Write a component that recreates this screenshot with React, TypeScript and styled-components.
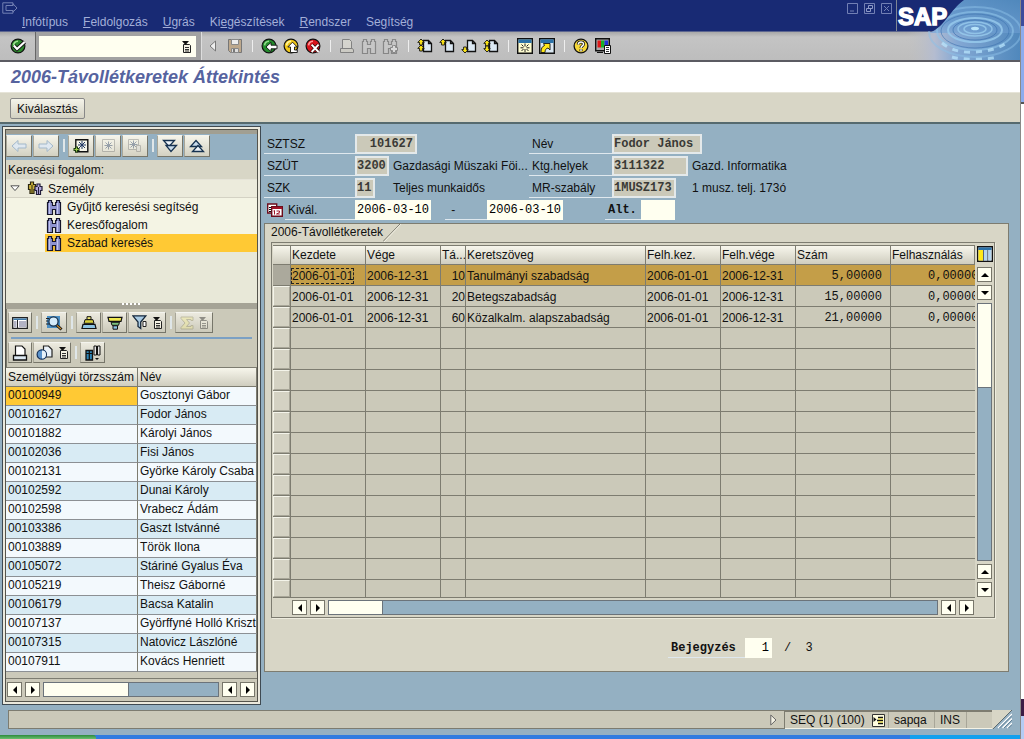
import React from "react";
import styled, { createGlobalStyle, css } from "styled-components";

const c = {
  navy: "#182a74",
  menuText: "#a3afd8",
  bar: "#c0c0c0",
  sand: "#d8d6c6",
  stone: "#cbc9b9",
  cream: "#e8e8d8",
  ivory: "#fffff0",
  steel: "#94b0c2",
  line: "#7d7c70",
  dark: "#3f4a52",
  amber: "#ffc934",
};

const Global = createGlobalStyle`
  * { box-sizing: border-box; }
  body {
    margin: 0;
    background: ${c.steel};
    color: #111;
    font: 12px/16px "Liberation Sans", Arial, sans-serif;
  }
  button, input { font: inherit; color: inherit; margin: 0; border-radius: 0; }
  button { padding: 0; cursor: default; }
  svg { display: block; flex: none; }
  ul { margin: 0; padding: 0; list-style: none; }
`;

/* ---------- icons ---------- */

const Svg = styled.svg.attrs({ "aria-hidden": true })<{ $dim?: boolean }>`
  opacity: ${(p) => (p.$dim ? 0.4 : 1)};
`;

type IconProps = { dim?: boolean };
const make =
  (w: number, h: number, body: React.ReactNode) =>
  ({ dim }: IconProps) => (
    <Svg width={w} height={h} viewBox={`0 0 ${w} ${h}`} $dim={dim}>
      {body}
    </Svg>
  );

const disc = (fill: string, light: string) => (
  <>
    <circle cx="8" cy="8" r="6.9" fill={fill} stroke="#111" strokeWidth="1.2" />
    <path d="M3.6 7.4A4.6 4.6 0 0 1 8 3.2" fill="none" stroke={light} strokeWidth="1.6" />
  </>
);

const OkIcon = make(16, 16, <>{disc("#2d8a2d", "#9fe08f")}<path d="M3.8 7.6 7 11 14.6 4" fill="none" stroke="#111" strokeWidth="4" /><path d="M3.8 7.6 7 11 14.6 4" fill="none" stroke="#fff" strokeWidth="2.2" /></>);
const BackIcon = make(17, 16, <>{disc("#238a2c", "#8fdc88")}<path d="M5 9l5-4.600v2.800H16v3.600h-6v2.800z" fill="#fff" stroke="#111" strokeWidth=".9" /></>);
const ExitIcon = make(16, 16, <>{disc("#f0c81a", "#fff7a0")}<path d="M9.5 4.2 14.2 9H11.500v3h2.800v2.500H7.500V9H4.800z" fill="#fff" stroke="#111" strokeWidth=".9" /></>);
const CancelIcon = make(16, 16, <>{disc("#d8141c", "#ff9c9c")}<path d="M6.6 6.6l7 7.4M13.6 6.6l-7 7.4" fill="none" stroke="#300" strokeWidth="3.400" /><path d="M6.6 6.6l7 7.4M13.6 6.6l-7 7.4" fill="none" stroke="#fff" strokeWidth="2" /></>);
const CollapseIcon = make(8, 12, <path d="M6.5 1v10L1 6z" fill="#eee" stroke="#777" />);
const SaveIcon = make(16, 16, <><path d="M1.5 1.5h13v13h-11l-2-2z" fill="#bda88c" stroke="#777" /><path d="M4.5 1.5h7v5h-7z" fill="#ececec" stroke="#888" /><path d="M4.5 10.5h7v4h-7z" fill="#ddd" stroke="#888" /><path d="M6 11h2v3H6z" fill="#777" /></>);
const PrintIcon = make(16, 16, <><path d="M3.500 1.500h7l2 2v7h-9z" fill="#f2f0e0" stroke="#222" /><path d="M1.500 10.500h12l1 1.500v2.5h-13z" fill="#dedccb" stroke="#222" /></>);
const binocular = (fill: string, stroke: string) => (
  <path d="M1.500 3.500h1v-2h3v2h1v3h3v-3h1v-2h3v2h1v12h-5v-5h-3v5h-5z" fill={fill} stroke={stroke} strokeWidth="1.200" />
);
const FindIcon = make(16, 16, binocular("#d0d0d0", "#333"));
const FindNextIcon = make(18, 16, <>{binocular("#d0d0d0", "#333")}<path d="M11.500 7.500h2v2h2v3h-2v2h-3v-2h-2v-3h2v-2z" fill="#fff" stroke="#333" /></>);
const TreeFindIcon = make(16, 16, <>{binocular("#8f93cf", "#15152a")}<path d="M3.500 4v11M11.500 4v11" stroke="#c0c4f0" /></>);

const sheet = <path d="M6.500 2.500h5l3 3v8h-8z M11.500 2.500v3h3" fill="#dce9f4" stroke="#111" strokeWidth="1.300" />;
const up = (y: number) => <path d={`M4 ${y}l3.200 3.400H5.400v2.600H2.600v-2.600H.8z`} fill="#ffe818" stroke="#111" strokeWidth=".9" />;
const down = (y: number) => <path d={`M4 ${y}l3.200-3.400H5.400v-2.600H2.600v2.600H.8z`} fill="#ffe818" stroke="#111" strokeWidth=".9" />;
const FirstIcon = make(16, 16, <>{sheet}{up(1)}{up(7)}</>);
const PrevIcon = make(16, 16, <>{sheet}{up(1)}</>);
const NextIcon = make(16, 16, <>{sheet}{down(15)}</>);
const LastIcon = make(16, 16, <>{sheet}{up(2)}{down(14)}</>);
const windowFrame = <><path d="M.7.7h14.600v14.600H.7z" fill="#fffdd0" stroke="#111" strokeWidth="1.400" /><path d="M1.400 1.400h13.200V5H1.400z" fill="#2c72a8" /></>;
const SessionIcon = make(16, 16, <>{windowFrame}<path d="M8 5.500v3M8 11v3M3.500 9.800h3M9.500 9.800h3M4.500 6.500l2 2M11.500 6.500l-2 2M4.500 13l2-2M11.500 13l-2-2" stroke="#222" fill="none" /></>);
const ShortcutIcon = make(16, 16, <><path d="M.7.7h14.600v14.600H.7z" fill="#dbe8f2" stroke="#111" strokeWidth="1.400" /><path d="M1.400 1.400h13.200V5H1.400z" fill="#2c72a8" /><path d="M2 14.500c0-4 1-6 3.500-7L4.500 5.500H11v6.500l-2-2c-2 .4-3 1.800-3 4.500z" fill="#ffe818" stroke="#111" strokeWidth=".9" /></>);
const HelpIcon = make(16, 16, <><circle cx="8" cy="8" r="6.900" fill="#f6d83a" stroke="#111" strokeWidth="1.300" /><path d="M5.300 6.400c0-3.400 5.400-3.200 5.200-.2-.1 1.700-2.500 1.800-2.500 3.800M8 11.300v2" fill="none" stroke="#111" strokeWidth="3" /><path d="M5.300 6.400c0-3.400 5.400-3.200 5.200-.2-.1 1.700-2.500 1.800-2.500 3.800M8 11.300v2" fill="none" stroke="#fff" strokeWidth="1.500" /></>);
const LayoutIcon = make(17, 16, <><path d="M.7.7h13.600v12H.7z" fill="#aaa" stroke="#111" strokeWidth="1.400" /><path d="M2.500 2.500h3.500v7H2.500z" fill="#e01818" /><path d="M6 2.500h3.500v7H6z" fill="#18b028" /><path d="M9.500 2.500H13v7H9.500z" fill="#2430d8" /><path d="M2 14.500h6" stroke="#111" /><path d="M9.500 7.500h6v8h-6z" fill="#fff" stroke="#111" /><path d="M11 9.500h3M11 11.500h3M11 13.500h3" stroke="#333" /></>);
const MenuIcon = make(11, 12, <><path d="M2.500 3.500h6l1 1v7h-7z" fill="#f4f2e4" stroke="#222" /><path d="M4 6.500h4M4 8.500h4M4 10h4" stroke="#333" /><path d="M1 0h7L4.500 4z" fill="#111" /></>);

const LeftArrowIcon = make(16, 14, <path d="M1 7l6-5.500V5h8v4H7v3.500z" fill="#dfe8f0" stroke="#a3b8ca" />);
const RightArrowIcon = make(16, 14, <path d="M15 7L9 1.500V5H1v4h8v3.500z" fill="#dfe8f0" stroke="#a3b8ca" />);
const star = (x: number, y: number) => (
  <path d={`M${x} ${y - 4}v8M${x - 4} ${y}h8M${x - 3} ${y - 3}l6 6M${x + 3} ${y - 3}l-6 6`} stroke="#233b66" fill="none" strokeWidth="1" />
);
const AddHelpIcon = make(16, 16, <><path d="M2.800 1.700h12v12h-12z" fill="#f7f6ea" stroke="#111" strokeWidth="1.400" />{star(9, 7)}<path d="M3.500 8.500v6M.5 11.500h6" stroke="#1d3c10" strokeWidth="3" /><path d="M3.500 9.500v4M1.500 11.500h4" stroke="#9fd04a" strokeWidth="1" /></>);
const HelpBoxIcon = make(16, 16, <><path d="M2.500 1.500h12v12h-12z" fill="#f7f6ea" stroke="#777" />{star(8.5, 7.5)}</>);
const HelpBoxesIcon = make(16, 16, <><path d="M1.500 1.500h10v10h-10z" fill="#f7f6ea" stroke="#777" />{star(6.5, 6.5)}<path d="M9.500 7.500h4v6h-4z" fill="#ddd" stroke="#777" /></>);
const ExpandAllIcon = make(16, 14, <><path d="M1.500 1.500h11L7 7.500z" fill="#eef4fa" stroke="#163250" strokeWidth="1.300" /><path d="M4 6.500h10.500L9 12.500z" fill="#c9dcec" stroke="#163250" strokeWidth="1.300" /></>);
const CollapseAllIcon = make(16, 14, <><path d="M1.500 7.500h11L7 1.500z" fill="#c9dcec" stroke="#163250" strokeWidth="1.300" /><path d="M3.500 12.500h11L9 6.500z" fill="#eef4fa" stroke="#163250" strokeWidth="1.300" /></>);
const OpenNodeIcon = make(10, 7, <path d="M.8.8h8.400L5 5.600z" fill="#fff" stroke="#555" />);
const PersonsIcon = make(16, 15, <><path d="M3.500 1h3v2.500h2v5h-1.500v4h-4v-4H1.500v-5h2z" fill="#c9b13c" stroke="#2b2610" strokeWidth="1.200" /><path d="M5 4v8" stroke="#2b2610" /><path d="M10 3h3v2.500h2v4h-1.500v4h-4v-4H8v-4h2z" fill="#b4aadc" stroke="#221d3a" strokeWidth="1.200" /><path d="M11.500 6v7" stroke="#221d3a" /></>);
const DetailIcon = make(16, 12, <><path d="M.7.7h14.600v10.600H.7z" fill="#fff" stroke="#222" strokeWidth="1.300" /><path d="M1.400 1.400h13.200V3H1.400z" fill="#3c78a8" /><path d="M5.500 3v8" stroke="#222" /><path d="M2 5h2.500M2 7h2.500M2 9h2.500M7 5h7M7 7h7M7 9h7" stroke="#668" /></>);
const ZoomIcon = make(18, 16, <><path d="M2 1h13v12H2z" fill="#4b8fc4" /><path d="M1 3.500h3M1 6h2M1 9h3" stroke="#222" /><path d="M11 9.500l5.500 5" stroke="#111" strokeWidth="3" /><path d="M11.500 10l4.500 4" stroke="#c98a2a" strokeWidth="1.200" /><circle cx="8.500" cy="6.500" r="4.600" fill="#d6ecfa" stroke="#16304c" strokeWidth="1.300" /></>);
const SortAscIcon = make(16, 14, <><path d="M6 .7h4v3H6z" fill="#f4ec70" stroke="#111" /><path d="M4 3.700h8l1 3.600H3z" fill="#d8cf3c" stroke="#111" /><path d="M2 8.300h12l1 4.200H1z" fill="#8ec4e4" stroke="#111" strokeWidth="1.200" /></>);
const SortDescIcon = make(16, 14, <><path d="M1 1.300h14l-1 4H2z" fill="#f0e850" stroke="#111" strokeWidth="1.200" /><path d="M4 6.300h8.500l-1 3H5z" fill="#7cc07c" stroke="#111" /><path d="M6 9.800h4.500v3.400H6z" fill="#8ec4e4" stroke="#111" /></>);
const FilterIcon = make(16, 15, <><path d="M.8.8h13L8.700 7v6.500L6 11.500V7z" fill="#a9cbe4" stroke="#16283c" strokeWidth="1.300" /><path d="M11 6.500h3v5h-3z" fill="#fff" stroke="#222" /></>);
const SumIcon = make(14, 14, <path d="M1 1h12v3.500h-2V3.500H6.500L9.500 7l-3 3.500H11v-1h2V13H1v-1.500L5 7 1 2.500z" fill="#f4ee90" stroke="#8a865a" />);
const ListPrintIcon = make(16, 16, <><path d="M3.500 1h6.500l3 3v7H3.500z" fill="#fff" stroke="#111" strokeWidth="1.200" /><path d="M1.500 10.500h13V15h-13z" fill="#dce8f2" stroke="#111" strokeWidth="1.300" /></>);
const ExportIcon = make(18, 16, <><path d="M7.500 1h5l3.500 3.500V12H7.500z" fill="#eaf2fa" stroke="#222" strokeWidth="1.200" /><circle cx="5.800" cy="9.500" r="4.700" fill="#5b93cc" stroke="#14305a" strokeWidth="1.200" /><path d="M6 5.500v8a4 4 0 0 0 0-8z" fill="#e8f2fa" /></>);
const ColumnsIcon = make(16, 16, <><path d="M1 5.500h6.500V15H1z" fill="#2f84b4" stroke="#111" strokeWidth="1.300" /><path d="M4.300 5.500V15M1 8.500h6.500" stroke="#111" strokeWidth="1.200" /><path d="M9 1h2.500v9H9zM12.500 1H15v9h-2.500z" fill="#e4e4e4" stroke="#111" /><path d="M10 13h4l-2 2z" fill="#111" /></>);
const CalendarIcon = make(16, 14, <><path d="M.7 1h9v9h-9z" fill="#fff" stroke="#6d0d1c" strokeWidth="1.400" /><path d="M2 4.500h2M2 6.500h2M2 8.500h2" stroke="#111" /><path d="M4.700 3.700h10.600v9.600H4.700z" fill="#fff" stroke="#6d0d1c" strokeWidth="1.400" /><path d="M5 4h10v2H5z" fill="#a01428" /><path d="M6.500 8l1-.5v4M9.500 8h3v1.500l-3 1.500h3.300" fill="none" stroke="#a01428" /></>);
const SettingsIcon = make(16, 16, <><path d="M.7.7h14.600v14.600H.7z" fill="#fff" stroke="#111" strokeWidth="1.400" /><path d="M1.400 1.400h13.200V4H1.400z" fill="#2c72a8" /><path d="M1.500 4H6v10.500H1.500z" fill="#ffe818" /><path d="M7 4h3v10.500H7zM11.300 4h3v10.500h-3z" fill="#b5d6ee" /><path d="M6.500 4v11M10.700 4v11" stroke="#567" /></>);
const SystemIcon = make(13, 13, <><path d="M.5.5h12v12H.5z" fill="#fffde0" stroke="#333" /><path d="M1.500 3l3 2.500L1.500 8z" fill="#111" /><path d="M6 3.500h5M5 6.500h6M6 9.500h5" stroke="#111" strokeWidth="1.500" /><path d="M6 5h5M6 8h5" stroke="#e8d820" /></>);
const ExitWindowIcon = make(16, 12, <path d="M11 3.500V.8H.8v10.400H11V8.500M4 3.500h7V1.800L15 6l-4 4V8.500H4z" fill="none" stroke="#7280b4" />);
const MinIcon = make(11, 11, <path d="M.5.5h10v10H.5zM3 8h4" fill="none" stroke="#7280b4" />);
const RestoreIcon = make(11, 11, <><path d="M.5.5h10v10H.5z" fill="none" stroke="#7280b4" /><path d="M4.500 2.500h4v3h-4zM2.500 5.500h4v3h-4z" fill="none" stroke="#8f9bc8" /></>);
const CloseIcon = make(11, 11, <path d="M.5.5h10v10H.5zM3 3l5 5M8 3L3 8" fill="none" stroke="#7280b4" />);
const StatusArrowIcon = make(7, 12, <path d="M.8 1v10L6 6z" fill="#f4f2e4" stroke="#666" />);
const GripIcon = make(20, 19, <><path d="M0 0h20L1 19H0z" fill={c.sand} /><path d="M20 0 1 19" stroke="#5c6a70" /><path d="M20 4 6 18M20 8.500l-9.500 9.500M20 13l-5 5" stroke="#fff" strokeWidth="1.300" /><path d="M20 5.500 7.500 18M20 10l-8 8M20 14.500 16.500 18" stroke="#5f7f95" /></>);

const arrows = { left: "M7 1v8L3 5z", right: "M3 1v8l4-4z", up: "M1 7h8L5 3z", down: "M1 3h8L5 7z" };

/* ---------- frame ---------- */

const Screen = styled.div`display: flex; min-height: 100vh;`;
const AppWindow = styled.div`flex: 1; min-width: 0; display: flex; flex-direction: column; background: ${c.steel};`;
const EdgeStrip = styled.div`
  width: 4px;
  display: flex;
  flex-direction: column;
  background: #fff;
  border-left: 1px solid #8a8a88;
`;
const EdgePart = styled.div<{ $h: number; $bg: string }>`height: ${(p) => p.$h}px; background: ${(p) => p.$bg};`;
const EdgeGap = styled.div`flex: 1;`;

const Header = styled.header`position: relative;`;
const MenuBar = styled.div`height: 32px; padding: 0 128px 0 2px; display: flex; justify-content: space-between; background: ${c.navy}; border-bottom: 1px solid #5c6690;`;
const MenuLeft = styled.div`padding-top: 2px;`;
const Menus = styled.nav`display: flex; gap: 15px; padding-left: 20px;`;
const MenuButton = styled.button`border: 0; background: none; color: ${c.menuText}; line-height: 16px;`;
const WindowButtons = styled.div`display: flex; gap: 6px; padding-top: 3px; align-items: flex-start;`;
const FrameButton = styled.button`border: 0; background: none; display: block;`;
const WaterArt = styled.svg`position: absolute; right: 0; top: 0;`;

const ToolBar = styled.div`
  height: 30px;
  display: flex;
  align-items: center;
  background: linear-gradient(#a8a8a8, #c4c4c4 5px, #bdbdbd);
  border-bottom: 2px solid #5b5b62;
`;
const OkBox = styled.div`width: 36px; height: 100%; padding-left: 10px; display: flex; align-items: center; border-right: 1px solid #666;`;
const CommandBox = styled.div`
  width: 166px;
  height: 100%;
  padding: 4px 5px 3px 3px;
  display: flex;
  background: #a2a2a2;
  border-right: 1px solid #ddd;
`;
const CommandField = styled.div`flex: 1; min-width: 0; display: flex; align-items: center; background: ${c.ivory}; padding-right: 4px;`;
const CommandInput = styled.input`flex: 1; min-width: 0; border: 0; background: none; outline: 0;`;
const ToolButton = styled.button`width: 22px; height: 22px; border: 0; background: none; display: flex; align-items: center; justify-content: center;`;
const ToolSep = styled.i`width: 12px; height: 12px; display: flex; justify-content: center; &::after { content: ""; width: 1px; background: #eee; }`;

const TitleBar = styled.div`height: 31px; padding: 0 11px; background: #fff; border-bottom: 1px solid #e6e4d8;`;
const Title = styled.h1`margin: 0; font-size: 18px; line-height: 30px; font-style: italic; font-weight: bold; color: #56639f;`;
const ActionBar = styled.div`height: 31px; padding: 5px 10px; background: ${c.sand}; border-bottom: 2px solid #566a6e;`;

const raised = css`
  background: linear-gradient(#f5f4ea, #d3d1c2);
  border: 1px solid;
  border-color: #f4f4ee #77766a #77766a #a8a698;
`;
const ActionButton = styled.button`${raised} height: 21px; padding: 0 6px; border-color: #888; border-radius: 2px;`;

/* ---------- left panel ---------- */

const Body = styled.main`flex: 1; display: flex; padding: 2px 11px 1px 2px;`;
const SidePanel = styled.section`width: 259px; flex: none; display: flex; padding: 2px; background: #ebe9dd; border: 1px solid ${c.dark};`;
const SideInner = styled.div`flex: 1; min-width: 0; display: flex; flex-direction: column; border: 1px solid #55544c; background: ${c.stone};`;
const SearchTools = styled.div`
  height: 30px;
  padding-top: 1px;
  display: flex;
  align-items: flex-start;
  gap: 1px;
  background: ${c.steel};
  border-top: 4px solid #a19f92;
`;
const PanelButton = styled.button<{ $w?: number }>`
  ${raised}
  width: ${(p) => p.$w ?? 26}px;
  height: 22px;
  display: flex;
  align-items: center;
  justify-content: center;
  gap: 4px;
`;
const PanelSep = styled.i`width: 7px; height: 13px; margin-top: 4px; display: flex; justify-content: center; &::after { content: ""; width: 2px; background: #dfe6e8; }`;
const Caption = styled.div`height: 20px; padding: 2px 2px; background: ${c.sand}; border-bottom: 1px solid #e6e4d8;`;
const TreeArea = styled.div`flex: 1; background: ${c.cream};`;
const TreeRow = styled.button<{ $selected?: boolean; $leaf?: boolean }>`
  width: 100%;
  height: 18px;
  padding: 0 0 0 ${(p) => (p.$leaf ? 40 : 3)}px;
  display: flex;
  align-items: center;
  border: 0;
  border-bottom: ${(p) => (p.$leaf ? "0" : "1px solid #d4d2c4")};
  background: ${(p) => (p.$selected ? `linear-gradient(90deg, #f4f4e4 39px, ${c.amber} 39px)` : p.$leaf ? "#f4f4e4" : "#ecebdc")};
`;
const TreeText = styled.span`padding-left: 5px;`;
const NodeMark = styled.span`width: 18px; padding-left: 1px;`;
const Splitter = styled.div`height: 6px; display: flex; justify-content: center; align-items: flex-start; background: #a5a396;`;
const SplitterGrip = styled.i`width: 20px; height: 2px; background: repeating-linear-gradient(90deg, #fff 0 2px, transparent 2px 4px);`;
const ListTools = styled.div`height: 58px; padding: 3px 5px 3px 1px; border-left: 1px solid #77766a;`;
const ListToolRow = styled.div`display: flex; gap: 1px;`;
const ListButton = styled(PanelButton)`height: 21px; background: linear-gradient(#eceadf, #cbc9ba);`;
const ListRule = styled.hr`margin: 4px 0 3px 3px; border: 0; height: 2px; background: #7ba0c4;`;

const clip = css`overflow: hidden; white-space: nowrap;`;
const DataTable = styled.table`width: 100%; table-layout: fixed; border-collapse: separate; border-spacing: 0;`;
const headCell = css`
  ${clip}
  padding: 0 1px;
  text-align: left;
  font-weight: normal;
  background: linear-gradient(#f7f6ec, #cfcdbf);
  border-right: 1px solid ${c.line};
  border-bottom: 1px solid ${c.line};
`;
const ListHead = styled.th`${headCell} height: 20px; border-top: 1px solid ${c.line}; padding: 0 2px;`;
const ListCell = styled.td<{ $alt?: boolean; $selected?: boolean }>`
  ${clip}
  height: 19px;
  padding: 0 2px 2px;
  line-height: 16px;
  border-right: 1px solid ${c.line};
  border-bottom: 1px solid #8c9094;
  background: ${(p) => (p.$selected ? c.amber : p.$alt ? "#d8ebf4" : "#f3f9fd")};
`;
const ListScroll = styled.div`height: 29px; padding: 4px 2px 4px 1px; border-top: 6px solid ${c.stone}; background: ${c.stone}; box-shadow: inset 0 1px ${c.line};`;

/* ---------- scroll bars ---------- */

const Bar = styled.div<{ $vertical?: boolean }>`
  flex: 1;
  display: flex;
  flex-direction: ${(p) => (p.$vertical ? "column" : "row")};
  gap: 3px;
`;
const BarButton = styled.button`width: 15px; height: 15px; border: 1px solid #77766a; background: ${c.ivory}; display: flex; align-items: center; justify-content: center;`;
const Track = styled.div<{ $vertical?: boolean }>`
  flex: 1;
  display: flex;
  flex-direction: ${(p) => (p.$vertical ? "column" : "row")};
  border: 1px solid #6b737a;
  background: ${c.steel};
`;
const Thumb = styled.div<{ $vertical?: boolean; $size: number }>`
  ${(p) => (p.$vertical ? `height: ${p.$size}px; border-bottom: 1px solid #6b737a;` : `width: ${p.$size}px; border-right: 1px solid #6b737a;`)}
  background: ${c.ivory};
`;
type Dir = keyof typeof arrows;
const Arrow = ({ dir }: { dir: Dir }) => (
  <BarButton type="button" aria-label={`Scroll ${dir}`}>
    <svg width="10" height="10" viewBox="0 0 10 10" aria-hidden="true"><path d={arrows[dir]} fill="#000" /></svg>
  </BarButton>
);
const ScrollBar = ({ vertical, thumb }: { vertical?: boolean; thumb: number }) => {
  const [a, b]: Dir[] = vertical ? ["up", "down"] : ["left", "right"];
  return (
    <Bar $vertical={vertical}>
      <Arrow dir={a} /><Arrow dir={b} />
      <Track $vertical={vertical}><Thumb $vertical={vertical} $size={thumb} /></Track>
      <Arrow dir={a} /><Arrow dir={b} />
    </Bar>
  );
};

/* ---------- right side ---------- */

const Work = styled.section`flex: 1; min-width: 0; padding: 8px 0 33px 3px; display: flex; flex-direction: column;`;
const Form = styled.form`display: flex; flex-direction: column; gap: 2px;`;
const FormRow = styled.div`display: flex; height: 20px; white-space: nowrap;`;
const Label = styled.label<{ $w: number; $mono?: boolean }>`
  width: ${(p) => p.$w}px;
  padding-left: 3px;
  line-height: 20px;
  border-bottom: 1px solid #dfe8ee;
  ${(p) => p.$mono && `font-family: "Liberation Mono", monospace; font-weight: bold;`}
`;
const FieldSlot = styled.div<{ $w: number }>`width: ${(p) => p.$w}px;`;
const Field = styled.input<{ $w: number; $open?: boolean; $right?: boolean }>`
  display: block;
  width: ${(p) => p.$w}px;
  height: 20px;
  padding: 0 ${(p) => (p.$right ? 2 : 0)}px 0 ${(p) => (p.$open ? 1 : 0)}px;
  font-family: "Liberation Mono", monospace;
  font-weight: ${(p) => (p.$open ? "normal" : "bold")};
  color: ${(p) => (p.$open ? "#000" : "#3a3a36")};
  text-align: ${(p) => (p.$right ? "right" : "left")};
  background: ${(p) => (p.$open ? c.ivory : c.stone)};
  border: ${(p) => (p.$open ? "1px" : "2px")} solid ${(p) => (p.$open ? c.ivory : "#e4e9ea")};
  outline: 0;
`;
const Note = styled.span<{ $w?: number }>`width: ${(p) => (p.$w ? p.$w + "px" : "auto")}; padding-left: 4px; line-height: 20px;`;
const IconSlot = styled.div`width: 21px; padding: 3px 0 0 3px;`;
const Spacer = styled.i<{ $w: number }>`width: ${(p) => p.$w}px;`;

const TabPanel = styled.section`flex: 1; margin-top: 3px; background: ${c.sand}; border: 1px solid ${c.line};`;
const TabStrip = styled.div`height: 18px; display: flex;`;
const Tab = styled.h2`margin: 0; padding-left: 6px; font-size: 12px; font-weight: normal; line-height: 16px;`;
const PanelBody = styled.div`padding: 0 13px 0 6px;`;
const GridFrame = styled.div`border: 1px solid ${c.line}; padding: 2px 0 0 1px; box-shadow: 1px 1px #eeecde;`;
const GridTop = styled.div`display: flex;`;
const GridView = styled.div`flex: 1; min-width: 0; overflow: hidden; background: ${c.stone};`;
const GridSide = styled.div`width: 19px; padding: 1px 2px 1px; display: flex; flex-direction: column; gap: 5px;`;
const SettingsButton = styled.button`border: 0; background: none; width: 16px; height: 16px;`;
const GridBottom = styled.div`display: flex; padding: 2px 20px 2px 19px;`;
const GridHead = styled.th`${headCell} height: 20px; border-top: 1px solid ${c.line};`;
const GridRow = styled.tr<{ $selected?: boolean; $last?: boolean }>`
  height: ${(p) => (p.$last ? 18 : 21)}px;
  background: ${(p) => (p.$selected ? "#c49e48" : c.stone)};
`;
const GridCell = styled.td<{ $right?: boolean; $mono?: boolean; $wide?: boolean }>`
  ${clip}
  padding: 1px ${(p) => (p.$mono && !p.$wide ? 8 : 0)}px 0 ${(p) => (p.$wide ? 37 : 1)}px;
  line-height: 16px;
  text-align: ${(p) => (p.$right ? "right" : "left")};
  font-family: ${(p) => (p.$mono ? `"Liberation Mono", monospace` : "inherit")};
  border-right: 1px solid ${c.line};
  border-bottom: 1px solid ${c.line};
  &:last-child { border-right: 0; }
`;
const SelectCell = styled.td`padding: 0; border-right: 1px solid ${c.line}; border-bottom: 1px solid ${c.line}; background: ${c.stone};`;
const RowSelect = styled.button<{ $on?: boolean; $short?: boolean }>`
  display: block;
  width: 100%;
  height: ${(p) => (p.$short ? 17 : 20)}px;
  border: 1px solid;
  border-color: ${(p) => (p.$on ? "#aba99c" : "#f4f4ea #a8a698 #a8a698 #f4f4ea")};
  background: ${(p) => (p.$on ? "#aba99c" : "#d4d2c3")};
`;
const Focus = styled.span`display: inline-block; line-height: 14px; outline: 1px dashed #222;`;
const Entry = styled.div`
  margin-top: 20px;
  padding-left: 397px;
  display: flex;
  height: 20px;
  font-family: "Liberation Mono", monospace;
  line-height: 20px;
`;
const EntryTotal = styled.span`padding-left: 12px;`;

/* ---------- footer ---------- */

const StatusBar = styled.footer`margin: 4px 8px 6px; height: 19px; display: flex;`;
const StatusMessage = styled.div`flex: 1; padding: 0 7px; display: flex; align-items: center; justify-content: flex-end; background: ${c.stone}; border: 1px solid ${c.line};`;
const StatusCells = styled.div`display: flex; background: ${c.stone}; border-top: 2px solid ${c.line}; border-bottom: 1px solid #f4f2e4;`;
const StatusCell = styled.div<{ $w: number }>`
  width: ${(p) => p.$w}px;
  padding-left: 5px;
  display: flex;
  align-items: center;
  gap: 7px;
  white-space: nowrap;
  border-right: 1px solid #a8a698;
  &:last-child { border-right: 0; }
`;
const TaskBar = styled.div`
  height: 4px;
  display: flex;
  background: #2f7be0;
`;
const StartEdge = styled.div`width: 96px; background: linear-gradient(#2c8a3c, #6cc070); border-radius: 0 3px 0 0;`;
const TrayEdge = styled.div`width: 110px; margin-left: auto; background: #12a0ee;`;

/* ---------- data ---------- */

const menus: [string, number][] = [["Infótípus", 0], ["Feldolgozás", 0], ["Ugrás", 0], ["Kiegészítések", 2], ["Rendszer", 0], ["Segítség", 2]];
const people = [
  ["00100949", "Gosztonyi Gábor"], ["00101627", "Fodor János"], ["00101882", "Károlyi János"],
  ["00102036", "Fisi János"], ["00102131", "Györke Károly Csaba"], ["00102592", "Dunai Károly"],
  ["00102598", "Vrabecz Ádám"], ["00103386", "Gaszt Istvánné"], ["00103889", "Török Ilona"],
  ["00105072", "Stáriné Gyalus Éva"], ["00105219", "Theisz Gáborné"], ["00106179", "Bacsa Katalin"],
  ["00107137", "Györffyné Holló Kriszt"], ["00107315", "Natovicz Lászlóné"], ["00107911", "Kovács Henriett"],
];
const heads = ["Kezdete", "Vége", "Tá...", "Keretszöveg", "Felh.kez.", "Felh.vége", "Szám", "Felhasználás"];
const widths = [75, 75, 25, 180, 75, 75, 95];
const quotas = [
  ["2006-01-01", "2006-12-31", "10", "Tanulmányi szabadság", "2006-01-01", "2006-12-31", "5,00000", "0,00000"],
  ["2006-01-01", "2006-12-31", "20", "Betegszabadság", "2006-01-01", "2006-12-31", "15,00000", "0,00000"],
  ["2006-01-01", "2006-12-31", "60", "Közalkalm. alapszabadság", "2006-01-01", "2006-12-31", "21,00000", "0,00000"],
];
const gridRows: string[][] = Array.from({ length: 16 }, (_, i) => quotas[i] ?? heads.map(() => ""));

type Tool = [string, React.ComponentType<IconProps>, boolean?] | null;
const tools: Tool[] = [
  ["Save", SaveIcon], null,
  ["Back", BackIcon], ["Exit", ExitIcon], ["Cancel", CancelIcon], null,
  ["Print", PrintIcon, true], ["Find", FindIcon, true], ["Find next", FindNextIcon, true], null,
  ["First page", FirstIcon], ["Previous page", PrevIcon], ["Next page", NextIcon], ["Last page", LastIcon], null,
  ["New session", SessionIcon], ["Create shortcut", ShortcutIcon], null,
  ["Help", HelpIcon], ["Layout", LayoutIcon],
];

const Water = () => (
  <WaterArt width="124" height="60" viewBox="0 0 124 60" aria-hidden="true">
    <defs>
      <linearGradient id="sky" x1="0" y1="1" x2="1" y2="0">
        <stop offset="0" stopColor="#8fb0d8" /><stop offset=".3" stopColor="#6c9ccf" />
        <stop offset="1" stopColor="#5088bc" />
      </linearGradient>
      <linearGradient id="fade" x1="0" y1="0" x2="1" y2="0">
        <stop offset="0" stopColor="#c0c0c0" stopOpacity="0" /><stop offset=".25" stopColor="#b4bcd0" />
        <stop offset=".45" stopColor="#84a8d4" /><stop offset="1" stopColor="#5088bc" />
      </linearGradient>
      <clipPath id="wave"><path d="M68 0h56v60H24V31h11C48 28 54 10 68 0z" /></clipPath>
    </defs>
    <path d="M.5 0v31" stroke="#7f8794" />
    <path d="M10 32h114v28H10z" fill="url(#fade)" />
    <path d="M68 0h56v33H33C48 28 54 10 68 0z" fill="url(#sky)" />
    <g clipPath="url(#wave)" fill="none">
      <ellipse cx="79" cy="32" rx="46" ry="25" stroke="#8cc0e8" strokeWidth="2" opacity=".5" />
      <ellipse cx="79" cy="31" rx="38" ry="19" stroke="#90c4ea" strokeWidth="2" opacity=".6" />
      <ellipse cx="79" cy="31" rx="34" ry="17" stroke="#3f74b0" strokeWidth="1" opacity=".6" />
      <ellipse cx="79" cy="30" rx="27" ry="12" stroke="#98ccee" strokeWidth="2" opacity=".8" />
      <ellipse cx="79" cy="30" rx="22" ry="10" stroke="#3f74b0" strokeWidth="1" opacity=".7" />
      <ellipse cx="79" cy="29" rx="17" ry="7" stroke="#98ccee" strokeWidth="1.500" opacity=".8" />
      <ellipse cx="79" cy="29" rx="11" ry="4.500" stroke="#98ccee" strokeWidth="1.500" opacity=".8" />
      <ellipse cx="79" cy="28.500" rx="4" ry="1.800" fill="#b8e4fa" />
      <path d="M46 43c10 8 22 10 34 9s22-3 32-10" stroke="#bce8ff" strokeWidth="3" strokeDasharray="6 6" opacity=".7" />
      <path d="M56 57c10 3 34 3 46 0" stroke="#bce8ff" strokeWidth="3" strokeDasharray="6 6" opacity=".7" />
    </g>
    <text x="2" y="25" fontFamily="Liberation Sans, Arial, sans-serif" fontWeight="bold" fontSize="24" fill="#fff" stroke="#fff" strokeWidth="1.400">SAP</text>
  </WaterArt>
);

export default function App() {
  return (
    <>
      <Global />
      <Screen>
        <AppWindow>
          <Header>
            <MenuBar>
              <MenuLeft>
                <ExitWindowIcon />
                <Menus>
                  {menus.map(([m, k]) => (
                    <MenuButton type="button" key={m}>{m.slice(0, k)}<u>{m[k]}</u>{m.slice(k + 1)}</MenuButton>
                  ))}
                </Menus>
              </MenuLeft>
              <WindowButtons>
                <FrameButton type="button" aria-label="Minimize"><MinIcon /></FrameButton>
                <FrameButton type="button" aria-label="Restore"><RestoreIcon /></FrameButton>
                <FrameButton type="button" aria-label="Close"><CloseIcon /></FrameButton>
              </WindowButtons>
            </MenuBar>
            <ToolBar>
              <OkBox><FrameButton type="button" aria-label="Enter"><OkIcon /></FrameButton></OkBox>
              <CommandBox>
                <CommandField>
                  <CommandInput aria-label="Command" />
                  <FrameButton type="button" aria-label="Command history"><MenuIcon /></FrameButton>
                </CommandField>
              </CommandBox>
              <ToolButton type="button" aria-label="Hide command field"><CollapseIcon /></ToolButton>
              {tools.map((t, i) => {
                if (!t) return <ToolSep key={i} />;
                const [name, Icon, dim] = t;
                return <ToolButton type="button" key={i} aria-label={name}><Icon dim={dim} /></ToolButton>;
              })}
            </ToolBar>
            <Water />
          </Header>
          <TitleBar><Title>2006-Távollétkeretek Áttekintés</Title></TitleBar>
          <ActionBar><ActionButton type="button">Kiválasztás</ActionButton></ActionBar>

          <Body>
            <SidePanel>
              <SideInner>
                <SearchTools>
                  <PanelButton type="button" aria-label="Previous"><LeftArrowIcon /></PanelButton>
                  <PanelButton type="button" aria-label="Next"><RightArrowIcon /></PanelButton>
                  <PanelSep />
                  <PanelButton type="button" aria-label="Create search"><AddHelpIcon /></PanelButton>
                  <PanelButton type="button" aria-label="Search variant"><HelpBoxIcon dim /></PanelButton>
                  <PanelButton type="button" aria-label="Delete variant"><HelpBoxesIcon dim /></PanelButton>
                  <PanelSep />
                  <PanelButton type="button" aria-label="Expand all"><ExpandAllIcon /></PanelButton>
                  <PanelButton type="button" aria-label="Collapse all"><CollapseAllIcon /></PanelButton>
                </SearchTools>
                <Caption>Keresési fogalom:</Caption>
                <TreeArea>
                  <TreeRow type="button"><NodeMark><OpenNodeIcon /></NodeMark><PersonsIcon /><TreeText>Személy</TreeText></TreeRow>
                  <ul>
                    {["Gyűjtő keresési segítség", "Keresőfogalom", "Szabad keresés"].map((t, i) => (
                      <li key={t}><TreeRow type="button" $leaf $selected={i === 2}><TreeFindIcon /><TreeText>{t}</TreeText></TreeRow></li>
                    ))}
                  </ul>
                </TreeArea>
                <Splitter><SplitterGrip /></Splitter>
                <ListTools>
                  <ListToolRow>
                    <ListButton type="button" $w={24} aria-label="Details"><DetailIcon /></ListButton>
                    <PanelSep />
                    <ListButton type="button" $w={26} aria-label="Find"><ZoomIcon /></ListButton>
                    <PanelSep />
                    <ListButton type="button" $w={25} aria-label="Sort ascending"><SortAscIcon /></ListButton>
                    <ListButton type="button" $w={25} aria-label="Sort descending"><SortDescIcon /></ListButton>
                    <ListButton type="button" $w={38} aria-label="Filter"><FilterIcon /><MenuIcon /></ListButton>
                    <PanelSep />
                    <ListButton type="button" $w={38} aria-label="Total"><SumIcon dim /><MenuIcon dim /></ListButton>
                  </ListToolRow>
                  <ListRule />
                  <ListToolRow>
                    <ListButton type="button" $w={24} aria-label="Print"><ListPrintIcon /></ListButton>
                    <ListButton type="button" $w={38} aria-label="Export"><ExportIcon /><MenuIcon /></ListButton>
                    <PanelSep />
                    <ListButton type="button" $w={25} aria-label="Choose columns"><ColumnsIcon /></ListButton>
                  </ListToolRow>
                </ListTools>
                <DataTable>
                  <colgroup><col width="132" /><col /></colgroup>
                  <thead><tr><ListHead scope="col">Személyügyi törzsszám</ListHead><ListHead scope="col">Név</ListHead></tr></thead>
                  <tbody>
                    {people.map(([id, name], i) => (
                      <tr key={id}>
                        <ListCell $alt={i % 2 === 1} $selected={i === 0}>{id}</ListCell>
                        <ListCell $alt={i % 2 === 1}>{name}</ListCell>
                      </tr>
                    ))}
                  </tbody>
                </DataTable>
                <ListScroll><ScrollBar thumb={85} /></ListScroll>
              </SideInner>
            </SidePanel>

            <Work>
              <Form>
                <FormRow>
                  <Label $w={91} htmlFor="sztsz">SZTSZ</Label>
                  <FieldSlot $w={174}><Field id="sztsz" $w={62} $right readOnly defaultValue="101627" /></FieldSlot>
                  <Label $w={83} htmlFor="nev">Név</Label>
                  <Field id="nev" $w={90} readOnly defaultValue="Fodor János" />
                </FormRow>
                <FormRow>
                  <Label $w={91} htmlFor="szut">SZÜT</Label>
                  <FieldSlot $w={34}><Field id="szut" $w={34} readOnly defaultValue="3200" /></FieldSlot>
                  <Note $w={140}>Gazdasági Müszaki Föi...</Note>
                  <Label $w={83} htmlFor="ktg">Ktg.helyek</Label>
                  <FieldSlot $w={76}><Field id="ktg" $w={76} readOnly defaultValue="3111322" /></FieldSlot>
                  <Note>Gazd. Informatika</Note>
                </FormRow>
                <FormRow>
                  <Label $w={91} htmlFor="szk">SZK</Label>
                  <FieldSlot $w={34}><Field id="szk" $w={20} readOnly defaultValue="11" /></FieldSlot>
                  <Note $w={140}>Teljes munkaidős</Note>
                  <Label $w={83} htmlFor="mr">MR-szabály</Label>
                  <FieldSlot $w={76}><Field id="mr" $w={64} readOnly defaultValue="1MUSZ173" /></FieldSlot>
                  <Note>1 musz. telj. 173ó</Note>
                </FormRow>
                <FormRow>
                  <IconSlot><CalendarIcon /></IconSlot>
                  <Label $w={70} htmlFor="from">Kivál.</Label>
                  <Field id="from" $w={76} $open defaultValue="2006-03-10" />
                  <Spacer $w={14} />
                  <Label $w={42} htmlFor="to">&nbsp;-</Label>
                  <Field id="to" $w={76} $open defaultValue="2006-03-10" />
                  <Spacer $w={42} />
                  <Label $w={36} $mono htmlFor="alt">Alt.</Label>
                  <Field id="alt" $w={34} $open />
                </FormRow>
              </Form>

              <TabPanel>
                <TabStrip>
                  <Tab>2006-Távollétkeretek</Tab>
                  <svg width="18" height="18" viewBox="0 0 18 18" aria-hidden="true">
                    <path d="M0 17.500 17 0" stroke={c.line} fill="none" /><path d="M1 18 18 0" stroke="#f2f0e4" fill="none" />
                  </svg>
                </TabStrip>
                <PanelBody>
                  <GridFrame>
                    <GridTop>
                      <GridView>
                        <DataTable>
                          <colgroup><col width="18" />{widths.map((w, i) => <col key={i} width={w} />)}<col /></colgroup>
                          <thead><tr><GridHead aria-label="Select" />{heads.map((h) => <GridHead key={h} scope="col">{h}</GridHead>)}</tr></thead>
                          <tbody>
                            {gridRows.map((r, i) => (
                              <GridRow key={i} $selected={i === 0} $last={i === 15}>
                                <SelectCell><RowSelect type="button" $on={i === 0} $short={i === 15} aria-label={`Row ${i + 1}`} /></SelectCell>
                                {r.map((v, j) => (
                                  <GridCell key={j} $right={j === 2 || j === 6} $mono={j > 5} $wide={j === 7}>
                                    {i === 0 && j === 0 ? <Focus>{v}</Focus> : v}
                                  </GridCell>
                                ))}
                              </GridRow>
                            ))}
                          </tbody>
                        </DataTable>
                      </GridView>
                      <GridSide>
                        <SettingsButton type="button" aria-label="Table settings"><SettingsIcon /></SettingsButton>
                        <ScrollBar vertical thumb={84} />
                      </GridSide>
                    </GridTop>
                    <GridBottom><ScrollBar thumb={54} /></GridBottom>
                  </GridFrame>
                  <Entry>
                    <Label $w={77} $mono htmlFor="entry">Bejegyzés</Label>
                    <Field id="entry" $w={27} $open $right defaultValue="1" />
                    <EntryTotal>/&nbsp; 3</EntryTotal>
                  </Entry>
                </PanelBody>
              </TabPanel>
            </Work>
          </Body>

          <StatusBar>
            <StatusMessage><StatusArrowIcon /></StatusMessage>
            <StatusCells>
              <StatusCell $w={104}>SEQ (1) (100)<SystemIcon /></StatusCell>
              <StatusCell $w={46}>sapqa</StatusCell>
              <StatusCell $w={32}>INS</StatusCell>
              <StatusCell $w={25} />
            </StatusCells>
            <GripIcon />
          </StatusBar>
          <TaskBar><StartEdge /><TrayEdge /></TaskBar>
        </AppWindow>
        <EdgeStrip>
          <EdgePart $h={26} $bg="#3c4c9c" />
          <EdgePart $h={76} $bg="#8cacee" />
          <EdgePart $h={2} $bg="#555" />
          <EdgeGap />
          <EdgePart $h={17} $bg="#3c1c44" />
          <EdgePart $h={23} $bg="#b4ccf4" />
        </EdgeStrip>
      </Screen>
    </>
  );
}
